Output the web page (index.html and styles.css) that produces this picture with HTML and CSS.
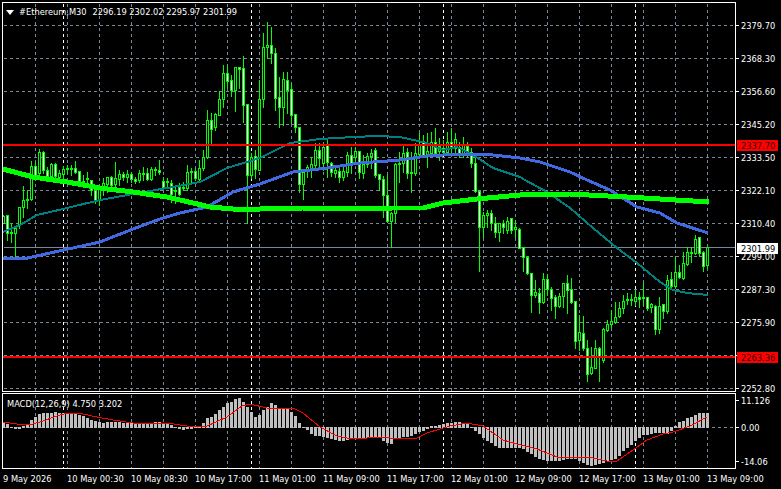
FILE: index.html
```html
<!DOCTYPE html>
<html lang="en">
<head>
<meta charset="utf-8">
<title>#Ethereum,M30</title>
<link rel="stylesheet" href="styles.css">
</head>
<body>
<main class="terminal">
  <section class="row row-price">
    <div class="pane pane-price">
      <svg id="price" class="plot" viewBox="3 3 732 388" width="732" height="388"></svg>
      <div class="legend">
        <svg class="menu-arrow" viewBox="0 0 8 5" width="8" height="5"><path d="M0 0H8L4 5Z"/></svg>
        <span class="symbol">#Ethereum,M30</span>
        <span class="ohlc">2296.19 2302.02 2295.97 2301.99</span>
      </div>
    </div>
    <div class="scale scale-price">
      <div class="tick">2379.70</div>
      <div class="tick">2368.30</div>
      <div class="tick">2356.60</div>
      <div class="tick">2345.20</div>
      <div class="tick">2333.50</div>
      <div class="tick">2322.10</div>
      <div class="tick">2310.40</div>
      <div class="tick">2299.00</div>
      <div class="tick">2287.30</div>
      <div class="tick">2275.90</div>
      <div class="tick"></div>
      <div class="tick">2252.80</div>
      <div class="tag tag-red tag-upper">2337.70</div>
      <div class="tag tag-white tag-last">2301.99</div>
      <div class="tag tag-red tag-lower">2263.36</div>
    </div>
  </section>
  <section class="row row-macd">
    <div class="pane pane-macd">
      <svg id="macd" class="plot" viewBox="3 394 732 74" width="732" height="74"></svg>
      <div class="legend legend-macd">MACD(12,26,9) 4.750 3.202</div>
    </div>
    <div class="scale scale-macd">
      <div class="tick">11.126</div>
      <div class="tick">0.00</div>
      <div class="tick">-14.06</div>
    </div>
  </section>
  <footer class="time-axis">
    <span>9 May 2026</span>
    <span>10 May 00:30</span>
    <span>10 May 08:30</span>
    <span>10 May 17:00</span>
    <span>11 May 01:00</span>
    <span>11 May 09:00</span>
    <span>11 May 17:00</span>
    <span>12 May 01:00</span>
    <span>12 May 09:00</span>
    <span>12 May 17:00</span>
    <span>13 May 01:00</span>
    <span>13 May 09:00</span>
  </footer>
</main>
<script src="chart.js"></script>
</body>
</html>
```

FILE: styles.css
```css
* { box-sizing: border-box; }

html, body {
  margin: 0;
  height: 100%;
  background: #000;
  overflow: hidden;
}

.terminal {
  width: 781px;
  height: 489px;
  padding: 2px 0 0 2px;
  color: #fff;
  font-family: "DejaVu Sans", "Liberation Sans", sans-serif;
  font-stretch: condensed;
  font-size: 9.2px;
  line-height: 12px;
}

.row { display: flex; }
.row-price { height: 390px; }
.row-macd { height: 76px; margin-top: 1px; }

.pane {
  position: relative;
  width: 734px;
  border: 1px solid #fff;
  background: #000;
}

.plot {
  display: block;
  shape-rendering: crispEdges;
}

.legend {
  position: absolute;
  top: 3px;
  left: 3px;
  display: flex;
  align-items: center;
  white-space: pre;
}

.menu-arrow { fill: #fff; margin-right: 5px; }
.symbol { margin-right: 6px; }

.legend-macd { top: 4px; left: 4px; }

.scale {
  position: relative;
  flex: 1;
}

.scale-price {
  padding-top: 17px;
  display: flex;
  flex-direction: column;
  height: 396px;
}

.scale-price .tick { flex: 0 0 33px; }

.tick {
  position: relative;
  height: 12px;
  padding: 1px 0 0 5px;
  white-space: nowrap;
}

.tick::before {
  content: "";
  position: absolute;
  left: 0;
  top: 6px;
  width: 3px;
  height: 1px;
  background: #fff;
}

.scale-macd {
  display: grid;
  grid-template-rows: 27px 34px 12px;
  padding-top: 1px;
}

.tag {
  position: absolute;
  left: 1px;
  width: 41px;
  height: 11px;
  padding-left: 4px;
  line-height: 11px;
  color: #000;
}

.tag-red { background: #f00; color: #300; }
.tag-white { background: #fff; }
.tag-upper { top: 138px; }
.tag-last { top: 241px; }
.tag-lower { top: 350px; }

.time-axis {
  display: flex;
  margin: 4px 0 0 1px;
  height: 12px;
  white-space: nowrap;
}

.time-axis span { flex: 0 0 64px; }
```

FILE: chart.js
```js
const NS = 'http://www.w3.org/2000/svg';
const LIME = '#00ff00', RED = '#ff0000', GRID = '#778899';

function add(svg, tag, attrs) {
  const el = document.createElementNS(NS, tag);
  for (const k in attrs) el.setAttribute(k, attrs[k]);
  svg.appendChild(el);
  return el;
}
const rect = (svg, x, y, w, h, fill) => add(svg, 'rect', { x, y, width: w, height: h, fill });
const line = (svg, x1, y1, x2, y2, stroke, dash, width) =>
  add(svg, 'line', { x1: x1 + .5, y1: y1 + .5, x2: x2 + .5, y2: y2 + .5, stroke,
    'stroke-width': width || 1, 'stroke-dasharray': dash || 'none' });
const curve = (svg, pts, stroke, width) =>
  add(svg, 'polyline', { points: pts.map(p => p.join(',')).join(' '), fill: 'none', stroke,
    'stroke-width': width, 'stroke-linejoin': 'round' });

/* candle rows, one per bar starting at x=3, 4px apart: [high, low, bodyTop, bodyBottom] in px */
const candles = [
[215,223,216,223],[215,240,215,233],[223,242,232,233],[226,257,228,233],[207,228,207,225],[186,217,200,207],[190,208,199,200],[161,200,166,199],
[162,180,166,175],[149,174,152,173],[151,173,152,170],[167,177,170,176],[163,177,164,176],[163,182,164,176],[170,180,173,177],[166,182,169,174],
[165,173,168,169],[165,175,168,169],[161,173,168,172],[171,185,171,181],[175,187,181,182],[172,185,178,179],[180,195,180,190],[185,203,190,200],
[185,205,187,200],[178,195,183,187],[177,192,177,184],[176,190,177,185],[162,188,178,184],[170,185,174,179],[172,180,174,177],[170,182,174,177],
[172,182,174,179],[177,183,179,181],[170,182,173,180],[167,180,173,174],[168,180,173,179],[167,180,169,179],[167,175,169,170],[160,174,170,172],
[177,188,181,187],[178,188,181,182],[180,202,183,194],[187,203,190,191],[183,195,187,194],[182,190,187,188],[165,190,172,188],[168,183,171,172],
[168,180,171,178],[160,180,168,179],[150,170,157,168],[110,158,120,157],[113,143,120,129],[113,130,114,127],[91,115,99,115],[65,107,73,99],
[65,87,73,81],[75,96,80,90],[67,111,67,90],[67,88,67,69],[56,122,68,105],[104,223,104,175],[153,178,157,175],[150,178,156,169],[80,170,99,170],
[33,107,47,99],[22,58,45,47],[27,63,45,53],[48,110,53,98],[77,127,97,107],[72,125,79,107],[72,113,80,90],[83,123,89,115],[114,132,114,127],
[127,192,127,184],[170,199,172,184],[165,177,167,170],[157,177,164,168],[143,170,150,165],[143,167,150,158],[145,170,147,163],[140,177,145,162],
[162,176,163,172],[168,177,170,173],[167,182,171,177],[167,180,171,177],[152,176,155,172],[147,173,155,163],[147,163,151,157],[151,178,151,172],
[155,178,164,173],[153,167,156,164],[149,168,153,156],[148,177,150,175],[174,190,174,179],[176,217,179,195],[175,222,195,221],[212,247,213,221],
[163,222,164,213],[152,182,163,164],[146,172,153,163],[148,178,152,173],[152,192,172,173],[143,175,153,173],[133,155,145,154],[135,157,141,155],
[133,167,151,154],[132,153,142,153],[128,153,142,153],[138,160,146,151],[140,153,148,152],[132,153,142,152],[128,153,142,148],[133,152,139,148],
[142,157,147,153],[137,157,145,153],[142,156,146,152],[148,167,152,163],[158,192,163,191],[190,271,191,227],[212,237,215,227],[210,227,213,215],
[210,230,213,223],[217,237,223,232],[223,241,223,232],[220,233,223,227],[217,233,221,230],[218,233,218,230],[220,237,227,229],[228,248,229,248],
[247,271,247,257],[256,274,257,273],[273,312,273,295],[280,297,292,295],[288,313,293,302],[273,303,279,302],[274,295,279,289],[287,310,289,298],
[295,318,297,306],[293,307,296,306],[283,307,283,296],[275,313,283,290],[278,303,289,302],[301,348,301,341],[315,350,332,340],[316,350,333,348],
[340,381,348,374],[347,374,367,373],[340,368,348,368],[347,381,348,357],[328,362,329,360],[320,331,324,330],[310,327,321,324],[302,323,317,322],
[302,317,308,316],[295,313,301,308],[293,304,299,300],[294,305,299,300],[290,305,297,301],[292,307,297,299],[283,305,297,298],[297,310,297,308],
[303,312,304,307],[305,334,306,329],[297,333,306,329],[304,318,304,311],[275,313,280,311],[272,288,279,286],[257,287,272,286],[265,278,272,277],
[252,279,263,278],[247,265,252,264],[247,262,252,253],[235,254,239,253],[237,256,237,253],[251,271,252,266],[247,268,247,265]
];

const tealMA = [[3,232],[20,225],[37,215],[63,209],[100,200],[133,194],[167,188],[200,182],[227,168],[260,158],[290,143],[320,139],[353,137],[377,136],[400,137],[427,143],[443,150],[457,147],[473,155],[493,168],[520,177],[525,180],[547,192],[570,208],[593,228],[617,248],[637,263],[660,282],[673,290],[687,293],[708,295]];
const blueMA = [[3,258],[23,259],[50,253],[100,242],[133,229],[160,219],[180,213],[207,207],[233,192],[260,184],[293,172],[327,168],[360,163],[400,160],[427,156],[460,154],[493,155],[520,158],[540,162],[570,172],[587,180],[610,190],[637,207],[660,213],[677,223],[708,233]];
const limeMA = [[3,169],[33,177],[67,182],[100,188],[133,192],[167,197],[193,203],[210,207],[233,209],[260,209],[303,208],[323,209],[393,208],[423,208],[443,203],[477,199],[520,195],[570,194],[627,197],[660,199],[709,202]];

/* MACD histogram tops per bar, sampled from the 3x view: y = 385 + v / 3, zero at v = 127 */
const hist = [
113,118,125,130,130,122,120,105,95,87,85,83,83,81,83,85,85,86,88,90,92,98,105,108,110,115,112,112,112,112,113,114,
115,116,116,118,117,115,112,112,113,115,120,125,130,131,130,128,125,122,115,100,95,88,75,65,55,50,42,40,50,65,80,95,
90,75,65,55,60,68,70,72,80,92,115,125,133,145,150,150,152,155,158,163,166,166,163,160,158,158,158,155,152,152,155,165,172,
175,160,155,153,153,150,145,138,135,130,124,123,120,118,115,113,111,112,113,118,125,135,145,155,165,172,180,185,186,187,187,187,
186,190,197,205,214,218,222,224,225,226,225,223,220,218,220,225,232,238,240,238,235,230,225,222,219,210,195,185,178,165,155,148,
146,143,140,140,142,145,135,122,112,108,100,95,90,85,84,85
];
const signal = [[3,422],[17,424],[33,424],[43,421],[57,416],[67,413],[83,414],[97,417],[113,420],[133,423],[167,423],[187,426],[207,426],[227,417],[242,406],[250,404],[267,408],[293,408],[303,413],[320,427],[337,436],[347,438],[367,438],[377,437],[390,438],[417,438],[427,433],[450,426],[467,423],[483,426],[503,440],[517,444],[537,449],[557,457],[573,457],[593,458],[607,461],[617,461],[633,450],[647,440],[663,434],[673,432],[690,426],[707,417]];

function verticalGrid(svg, top, bottom) {
  const days = [63, 251, 443, 635];
  for (let x = 35; x <= 707; x += 32) line(svg, x, top, x, bottom, GRID, '3 3');
  days.forEach(x => line(svg, x, top, x, bottom, '#fff', '3 3'));
}

function drawPrice(svg) {
  for (let y = 25; y <= 388; y += 33) line(svg, 3, y, 735, y, GRID, '3 3');
  verticalGrid(svg, 3, 391);
  line(svg, 3, 247, 735, 247, GRID);

  let prev = null;
  candles.forEach(([hi, lo, top, bot], i) => {
    const x = 3 + i * 4;
    const bear = prev !== null && Math.abs(top - prev) < Math.abs(bot - prev);
    prev = bear ? bot : top;
    rect(svg, x, hi, 1, lo - hi + 1, LIME);
    rect(svg, x - 1, top, 3, bot - top + 1, LIME);
    if (bot - top > 1) rect(svg, x, top + 1, 1, bot - top - 1, bear ? '#fff' : '#000');
  });

  curve(svg, tealMA, '#008080', 2);
  curve(svg, blueMA, '#4169e1', 3);
  curve(svg, limeMA, LIME, 5);

  rect(svg, 3, 144, 732, 2, RED);
  rect(svg, 3, 356, 732, 2, RED);
}

function drawMacd(svg) {
  verticalGrid(svg, 394, 468);
  line(svg, 3, 427, 735, 427, GRID, '3 3');
  hist.forEach((v, i) => {
    const x = 3 + i * 4;
    const y = Math.round(385 + v / 3);
    rect(svg, x - 1, Math.min(y, 427), 3, Math.abs(y - 427) + 1, '#c0c0c0');
  });
  curve(svg, signal, RED, 1);
}

drawPrice(document.getElementById('price'));
drawMacd(document.getElementById('macd'));
```
